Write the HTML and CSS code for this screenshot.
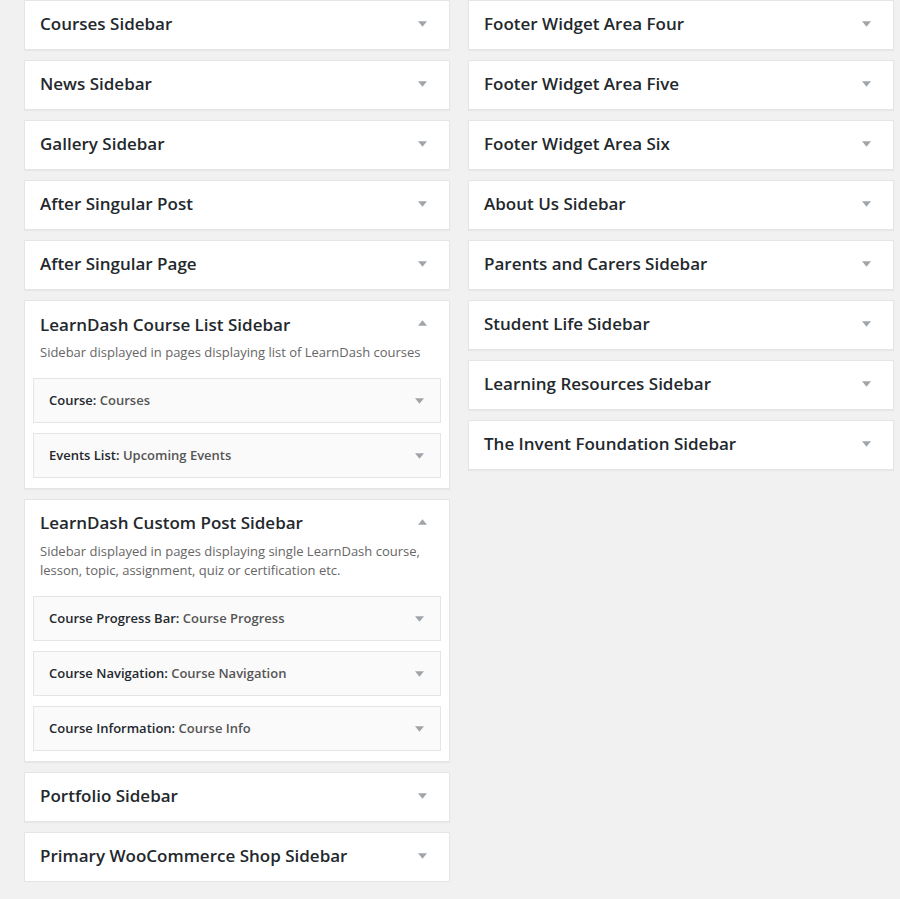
FILE: index.html
```html
<!DOCTYPE html>
<html>
<head>
<meta charset="utf-8">
<link rel="stylesheet" href="styles.css">
</head>
<body>
<div class="areas">
  <div class="col">
    <div class="box"><div class="head"><h2>Courses Sidebar</h2><svg class="arr" viewBox="0 0 10 6"><polygon points="0,0 10,0 5,6"/></svg></div></div>
    <div class="box"><div class="head"><h2>News Sidebar</h2><svg class="arr" viewBox="0 0 10 6"><polygon points="0,0 10,0 5,6"/></svg></div></div>
    <div class="box"><div class="head"><h2>Gallery Sidebar</h2><svg class="arr" viewBox="0 0 10 6"><polygon points="0,0 10,0 5,6"/></svg></div></div>
    <div class="box"><div class="head"><h2>After Singular Post</h2><svg class="arr" viewBox="0 0 10 6"><polygon points="0,0 10,0 5,6"/></svg></div></div>
    <div class="box"><div class="head"><h2>After Singular Page</h2><svg class="arr" viewBox="0 0 10 6"><polygon points="0,0 10,0 5,6"/></svg></div></div>
    <div class="box open">
      <div class="head"><h2>LearnDash Course List Sidebar</h2><svg class="arr" viewBox="0 0 10 6"><polygon points="0,6 10,6 5,0"/></svg></div>
      <p class="desc">Sidebar displayed in pages displaying list of LearnDash courses</p>
      <div class="widgets">
        <div class="widget"><h3>Course: <span class="in">Courses</span></h3><svg class="warr" viewBox="0 0 10 6"><polygon points="0,0 10,0 5,6"/></svg></div>
        <div class="widget"><h3>Events List: <span class="in">Upcoming Events</span></h3><svg class="warr" viewBox="0 0 10 6"><polygon points="0,0 10,0 5,6"/></svg></div>
      </div>
    </div>
    <div class="box open">
      <div class="head"><h2>LearnDash Custom Post Sidebar</h2><svg class="arr" viewBox="0 0 10 6"><polygon points="0,6 10,6 5,0"/></svg></div>
      <p class="desc">Sidebar displayed in pages displaying single LearnDash course, lesson, topic, assignment, quiz or certification etc.</p>
      <div class="widgets">
        <div class="widget"><h3>Course Progress Bar: <span class="in">Course Progress</span></h3><svg class="warr" viewBox="0 0 10 6"><polygon points="0,0 10,0 5,6"/></svg></div>
        <div class="widget"><h3>Course Navigation: <span class="in">Course Navigation</span></h3><svg class="warr" viewBox="0 0 10 6"><polygon points="0,0 10,0 5,6"/></svg></div>
        <div class="widget"><h3>Course Information: <span class="in">Course Info</span></h3><svg class="warr" viewBox="0 0 10 6"><polygon points="0,0 10,0 5,6"/></svg></div>
      </div>
    </div>
    <div class="box"><div class="head"><h2>Portfolio Sidebar</h2><svg class="arr" viewBox="0 0 10 6"><polygon points="0,0 10,0 5,6"/></svg></div></div>
    <div class="box"><div class="head"><h2>Primary WooCommerce Shop Sidebar</h2><svg class="arr" viewBox="0 0 10 6"><polygon points="0,0 10,0 5,6"/></svg></div></div>
  </div>
  <div class="col">
    <div class="box"><div class="head"><h2>Footer Widget Area Four</h2><svg class="arr" viewBox="0 0 10 6"><polygon points="0,0 10,0 5,6"/></svg></div></div>
    <div class="box"><div class="head"><h2>Footer Widget Area Five</h2><svg class="arr" viewBox="0 0 10 6"><polygon points="0,0 10,0 5,6"/></svg></div></div>
    <div class="box"><div class="head"><h2>Footer Widget Area Six</h2><svg class="arr" viewBox="0 0 10 6"><polygon points="0,0 10,0 5,6"/></svg></div></div>
    <div class="box"><div class="head"><h2>About Us Sidebar</h2><svg class="arr" viewBox="0 0 10 6"><polygon points="0,0 10,0 5,6"/></svg></div></div>
    <div class="box"><div class="head"><h2>Parents and Carers Sidebar</h2><svg class="arr" viewBox="0 0 10 6"><polygon points="0,0 10,0 5,6"/></svg></div></div>
    <div class="box"><div class="head"><h2>Student Life Sidebar</h2><svg class="arr" viewBox="0 0 10 6"><polygon points="0,0 10,0 5,6"/></svg></div></div>
    <div class="box"><div class="head"><h2>Learning Resources Sidebar</h2><svg class="arr" viewBox="0 0 10 6"><polygon points="0,0 10,0 5,6"/></svg></div></div>
    <div class="box"><div class="head"><h2>The Invent Foundation Sidebar</h2><svg class="arr" viewBox="0 0 10 6"><polygon points="0,0 10,0 5,6"/></svg></div></div>
  </div>
</div>
</body>
</html>
```
FILE: styles.css
```css
html, body {
  margin: 0;
  padding: 0;
  background: #f1f1f1;
  font-family: "Open Sans", "Liberation Sans", sans-serif;
  color: #23282d;
}
.areas {
  display: flex;
  align-items: flex-start;
  gap: 18px;
  padding-left: 24px;
}
.col {
  width: 426px;
  display: flex;
  flex-direction: column;
  gap: 10px;
}
.box {
  background: #fff;
  border: 1px solid #e5e5e5;
  box-shadow: 0 1px 1px rgba(0,0,0,0.04);
}
.head {
  height: 48px;
  box-sizing: border-box;
  display: flex;
  align-items: center;
  justify-content: space-between;
  padding: 0 22px 2px 15px;
}
.open .head {
  height: 42px;
  padding-top: 5px;
  padding-bottom: 0;
}
.head h2 {
  margin: 0;
  font-size: 17px;
  font-weight: 600;
  line-height: 24px;
  color: #23282d;
}
.arr {
  width: 9px;
  height: 6px;
  fill: #a0a5aa;
}
.open .head .arr {
  margin-top: -3px;
}
.desc {
  margin: 0;
  padding: 0 15px;
  font-size: 13px;
  line-height: 19.5px;
  color: #666;
}
.widgets {
  display: flex;
  flex-direction: column;
  gap: 10px;
  padding: 15px 8px 10px 8px;
}
.widget {
  height: 43px;
  background: #fafafa;
  border: 1px solid #e5e5e5;
  display: flex;
  align-items: center;
  justify-content: space-between;
  padding: 0 16px 0 15px;
}
.widget h3 {
  margin: 0;
  font-size: 13px;
  font-weight: 600;
  line-height: 18px;
  color: #23282d;
}
.widget .in {
  color: #555;
}
.warr {
  width: 9px;
  height: 6px;
  fill: #a0a5aa;
  margin-top: 2px;
}
```
